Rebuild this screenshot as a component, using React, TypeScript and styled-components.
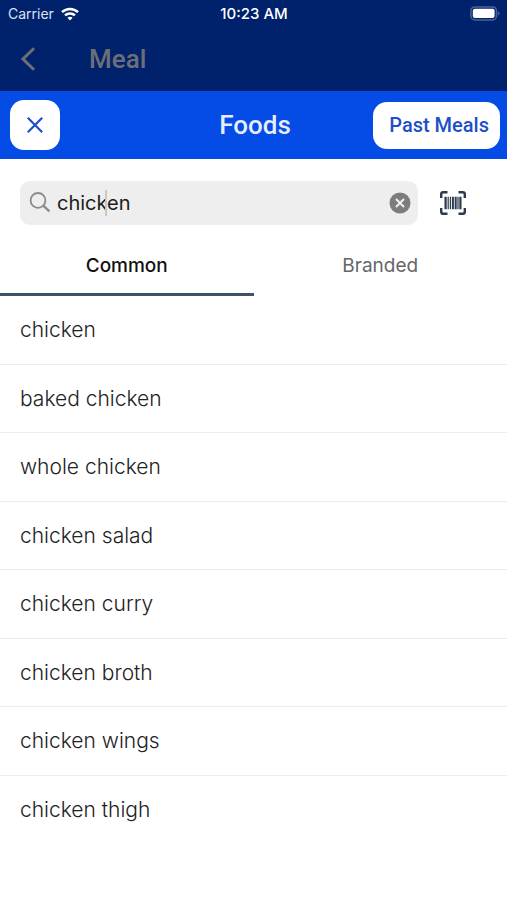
import React, { useState } from "react";
import styled, { createGlobalStyle, css } from "styled-components";

const sans = `Inter, "Liberation Sans", sans-serif`;
const roboto = `Roboto, "Liberation Sans", sans-serif`;

const GlobalStyle = createGlobalStyle`
  *, *::before, *::after { box-sizing: border-box; }
  body { margin: 0; background: #fff; font-family: ${sans}; }
  button, input { font: inherit; color: inherit; border: 0; padding: 0; background: none; }
  button { cursor: pointer; }
  svg { display: block; }
`;

const Screen = styled.main`
  min-height: 100vh;
  background: #fff;
`;

const Backdrop = styled.header`
  background: #00216b;
`;

const StatusBar = styled.div`
  display: grid;
  grid-template-columns: 1fr auto 1fr;
  align-items: center;
  height: 27px;
  padding: 0 7px 0 8px;
  color: #fff;
  font-size: 14px;
`;

const Carrier = styled.div`
  display: flex;
  align-items: center;
  gap: 7px;
  color: #dce2f2;
`;

const Clock = styled.time`
  font-size: 15px;
  font-weight: 500;
`;

const BatterySlot = styled.div`
  justify-self: end;
`;

const MealBar = styled.div`
  display: flex;
  align-items: center;
  gap: 52px;
  height: 64px;
  padding: 0 20px;
  color: #6c6f78;
`;

const BackButton = styled.button`
  display: flex;
`;

const BarTitle = styled.h1`
  margin: 0;
  font-family: ${roboto};
  font-size: 26px;
  font-weight: 500;
`;

const FoodsBar = styled.div`
  display: grid;
  grid-template-columns: 1fr auto 1fr;
  align-items: center;
  height: 68px;
  padding: 0 7px 0 10px;
  background: #054be6;
  color: #e6edff;
`;

const barButton = css`
  display: flex;
  align-items: center;
  justify-content: center;
  background: #fff;
  color: #1c50c8;
  border-radius: 14px;
`;

const CloseButton = styled.button`
  ${barButton}
  width: 50px;
  height: 50px;
`;

const PastMeals = styled.button`
  ${barButton}
  justify-self: end;
  height: 47px;
  padding: 0 11px 0 16px;
  font-family: ${roboto};
  font-size: 20px;
  font-weight: 500;
`;

const SearchRow = styled.form`
  display: flex;
  align-items: center;
  gap: 22px;
  padding: 22px 41px 11px 20px;
`;

const SearchField = styled.label`
  position: relative;
  flex: 1;
  display: flex;
  align-items: center;
  gap: 6px;
  height: 44px;
  padding: 0 7px 0 9px;
  border-radius: 10px;
  background: #eeeeee;
`;

const SearchInput = styled.input`
  flex: 1;
  min-width: 0;
  outline: none;
  color: #1c1c1c;
  font-size: 20px;
`;

const Caret = styled.span`
  position: absolute;
  left: 85px;
  top: 9px;
  width: 2px;
  height: 26px;
  background: #c8c8c8;
`;

const IconButton = styled.button`
  display: flex;
`;

const Tabs = styled.div`
  display: grid;
  grid-template-columns: 1fr 1fr;
`;

const Tab = styled.button<{ $active: boolean }>`
  height: 60px;
  padding-top: 2px;
  border-bottom: 3px solid ${(p) => (p.$active ? "#40526a" : "transparent")};
  color: ${(p) => (p.$active ? "#111" : "#666")};
  font-size: 19px;
  font-weight: ${(p) => (p.$active ? 500 : 400)};
`;

const FoodList = styled.ul`
  display: grid;
  grid-auto-rows: 1fr;
  min-height: 548px;
  margin: 0;
  padding: 0;
  list-style: none;
`;

const FoodItem = styled.li`
  display: flex;
  border-bottom: 1px solid #ececec;
  &:last-child { border-bottom-color: transparent; }
`;

const FoodButton = styled.button`
  flex: 1;
  padding: 0 20px;
  text-align: left;
  color: #222;
  font-size: 21px;
  font-weight: 300;
`;

const WifiIcon = () => (
  <svg width="18" height="14" viewBox="0 0 18 14" fill="none" stroke="#fff" strokeWidth="2.5" aria-hidden="true">
    <path d="M1 5.2C5.5 .9 12.5 .9 17 5.2" />
    <path d="M4 8.4C6.8 5.7 11.2 5.7 14 8.4" />
    <path d="M6.4 10.7C7.9 9.3 10.1 9.3 11.6 10.7L9 13.4Z" fill="#fff" stroke="none" />
  </svg>
);

const BatteryIcon = () => (
  <svg width="30" height="15" viewBox="0 0 30 15" aria-label="Battery full">
    <rect x=".9" y=".9" width="25.6" height="13.1" rx="4" fill="none" stroke="#4a639d" strokeWidth="1.5" />
    <rect x="2.8" y="2.8" width="21.8" height="9.3" rx="2" fill="#fff" />
    <path d="M27.8 5.2C30 5.8 30 9 27.8 9.6Z" fill="#4a639d" />
  </svg>
);

const BackIcon = () => (
  <svg width="17" height="26" viewBox="0 0 17 26" fill="none" stroke="currentColor" strokeWidth="3" aria-hidden="true">
    <path d="M14 2.2L3 13L14 23.8" />
  </svg>
);

const CloseIcon = () => (
  <svg width="18" height="18" viewBox="0 0 18 18" fill="none" stroke="currentColor" strokeWidth="2.2" aria-hidden="true">
    <path d="M1.8 1.8L16.2 16.2M16.2 1.8L1.8 16.2" />
  </svg>
);

const SearchIcon = () => (
  <svg width="22" height="22" viewBox="0 0 22 22" fill="none" stroke="#8b8b8b" strokeWidth="1.8" aria-hidden="true">
    <circle cx="9" cy="8.4" r="7.4" />
    <path d="M14.3 13.7L20.4 19.4" strokeWidth="2.4" />
  </svg>
);

const ClearIcon = () => (
  <svg width="22" height="22" viewBox="0 0 22 22" aria-hidden="true">
    <circle cx="11" cy="11" r="10.5" fill="#7d7d7d" />
    <path d="M7 7L15 15M15 7L7 15" stroke="#f1f1f1" strokeWidth="2" />
  </svg>
);

const BarcodeIcon = () => (
  <svg width="26" height="24" viewBox="0 0 26 24" fill="none" stroke="#2b3a4d" aria-hidden="true">
    <path
      d="M1.2 7V3.2Q1.2 1.2 3.2 1.2H7.5M18.5 1.2H22.8Q24.8 1.2 24.8 3.2V7M24.8 17V20.8Q24.8 22.8 22.8 22.8H18.5M7.5 22.8H3.2Q1.2 22.8 1.2 20.8V17"
      strokeWidth="2.4"
    />
    <path d="M5.6 5.8V18.2M20.4 5.8V18.2" strokeWidth="2.2" />
    <path d="M8.2 5.8V18.2M10.4 5.8V18.2M18 5.8V18.2" strokeWidth="1.2" />
    <path d="M12.9 5.8V18.2M15.7 5.8V18.2" strokeWidth="2" />
  </svg>
);

const foods = [
  "chicken",
  "baked chicken",
  "whole chicken",
  "chicken salad",
  "chicken curry",
  "chicken broth",
  "chicken wings",
  "chicken thigh",
];

export default function App() {
  const [query, setQuery] = useState("chicken");
  const [tab, setTab] = useState("Common");

  return (
    <>
      <GlobalStyle />
      <Screen>
        <Backdrop>
          <StatusBar>
            <Carrier>
              Carrier
              <WifiIcon />
            </Carrier>
            <Clock>10:23 AM</Clock>
            <BatterySlot>
              <BatteryIcon />
            </BatterySlot>
          </StatusBar>
          <MealBar>
            <BackButton type="button" aria-label="Back">
              <BackIcon />
            </BackButton>
            <BarTitle>Meal</BarTitle>
          </MealBar>
        </Backdrop>
        <FoodsBar>
          <CloseButton type="button" aria-label="Close">
            <CloseIcon />
          </CloseButton>
          <BarTitle as="h2">Foods</BarTitle>
          <PastMeals type="button">Past Meals</PastMeals>
        </FoodsBar>
        <SearchRow onSubmit={(e) => e.preventDefault()}>
          <SearchField>
            <SearchIcon />
            <SearchInput
              type="text"
              aria-label="Search foods"
              value={query}
              onChange={(e) => setQuery(e.target.value)}
            />
            {query === "chicken" && <Caret />}
            <IconButton type="button" aria-label="Clear search" onClick={() => setQuery("")}>
              <ClearIcon />
            </IconButton>
          </SearchField>
          <IconButton type="button" aria-label="Scan barcode">
            <BarcodeIcon />
          </IconButton>
        </SearchRow>
        <Tabs role="tablist">
          {["Common", "Branded"].map((name) => (
            <Tab
              key={name}
              type="button"
              role="tab"
              aria-selected={tab === name}
              $active={tab === name}
              onClick={() => setTab(name)}
            >
              {name}
            </Tab>
          ))}
        </Tabs>
        <FoodList>
          {foods.map((food) => (
            <FoodItem key={food}>
              <FoodButton type="button">{food}</FoodButton>
            </FoodItem>
          ))}
        </FoodList>
      </Screen>
    </>
  );
}
